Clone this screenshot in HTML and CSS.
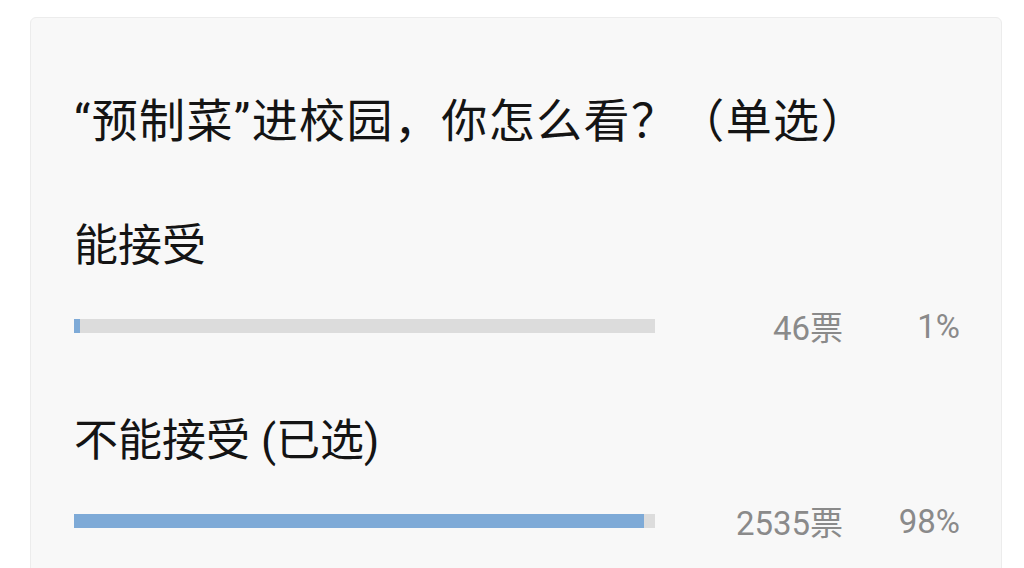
FILE: index.html
```html
<!DOCTYPE html>
<html lang="zh-CN">
<head>
    <meta charset="UTF-8">
    <meta name="viewport" content="width=device-width, initial-scale=1.0">
    <title>投票</title>
    <link rel="stylesheet" href="styles.css">
</head>
<body>
    <div class="vote-card">
        <h2 class="vote-title">“预制菜”进校园，你怎么看？（单选）</h2>

        <div class="option">
            <div class="option-label">能接受</div>
            <div class="option-stats">
                <div class="bar"><div class="bar-fill" style="width: 1%"></div></div>
                <span class="votes">46票</span>
                <span class="percent">1%</span>
            </div>
        </div>

        <div class="option">
            <div class="option-label">不能接受 (已选)</div>
            <div class="option-stats">
                <div class="bar"><div class="bar-fill" style="width: 98%"></div></div>
                <span class="votes">2535票</span>
                <span class="percent">98%</span>
            </div>
        </div>
    </div>
</body>
</html>
```

FILE: styles.css
```css
:root {
    --color-text: #141414;
    --color-muted: #8a8a8a;
    --color-track: #dcdcdc;
    --color-fill: #7eaad7;
}
body { margin: 0; background-color: #ffffff; font-family: Roboto, "Noto Sans CJK SC", sans-serif; color: var(--color-text); }

/* Tarjeta de la encuesta */
.vote-card { margin: 17px 22px 0 30px; padding: 73px 41px 40px 43px; background-color: #f8f8f8; border: 1px solid #ececec; border-radius: 6px; }
.vote-title { margin: 0; font-size: 46px; line-height: 60px; font-weight: 400; letter-spacing: 1.4px; }

.option { margin-top: 65px; }
.option-label { font-size: 44px; line-height: 60px; }
.option-stats { display: flex; align-items: center; height: 40px; margin-top: 30px; }
.bar { width: 582px; height: 14px; background-color: var(--color-track); }
.bar-fill { height: 100%; background-color: var(--color-fill); }
.votes, .percent { font-size: 33px; color: var(--color-muted); text-align: right; }
.votes { width: 188px; }
.percent { width: 117px; }
```
